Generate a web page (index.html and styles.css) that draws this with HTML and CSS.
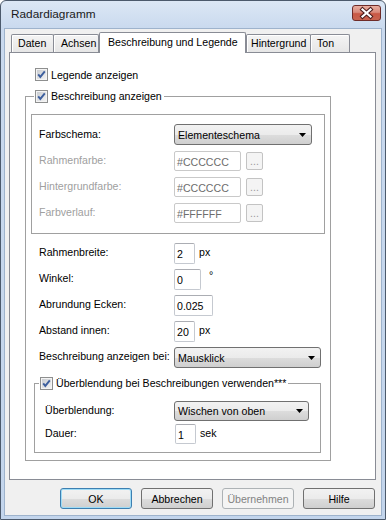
FILE: index.html
```html
<!DOCTYPE html>
<html lang="de">
<head>
<meta charset="utf-8">
<title>Radardiagramm</title>
<link rel="stylesheet" href="styles.css">
</head>
<body>
<svg class="defs" width="0" height="0" aria-hidden="true">
  <defs>
    <linearGradient id="cbfill" x1="0" y1="0" x2="1" y2="1">
      <stop offset="0" stop-color="#c9ccd1"/>
      <stop offset="1" stop-color="#f3f3f3"/>
    </linearGradient>
  </defs>
</svg>
<div class="window">
  <div class="titlebar">
    <span class="title">Radardiagramm</span>
    <span class="close">
      <svg width="29" height="16" viewBox="0 0 29 16">
        <path d="M10.5 4.5 L18.5 11.5 M18.5 4.5 L10.5 11.5" stroke="#4a1c1c" stroke-width="4.2" stroke-linecap="square" fill="none"/>
        <path d="M10.5 4.5 L18.5 11.5 M18.5 4.5 L10.5 11.5" stroke="#ffffff" stroke-width="2.2" stroke-linecap="square" fill="none"/>
      </svg>
    </span>
  </div>
  <div class="client">
    <div class="tabs">
      <div class="tab w-daten">Daten</div>
      <div class="tab w-achsen">Achsen</div>
      <div class="tab active w-beschr">Beschreibung und Legende</div>
      <div class="tab w-hinter">Hintergrund</div>
      <div class="tab w-ton">Ton</div>
    </div>
    <div class="panel">
      <div class="check-row legende">
        <svg class="cb" width="13" height="13" viewBox="0 0 13 13"><rect x="0.5" y="0.5" width="12" height="12" fill="#f4f4f4" stroke="#8e8f8f"/><rect x="2" y="2" width="9" height="9" fill="url(#cbfill)"/><path d="M3.2 6.4 L5.3 8.9 L9.8 3.3" stroke="#3d5f9e" stroke-width="1.9" fill="none"/></svg>
        <span>Legende anzeigen</span>
      </div>
      <fieldset class="grp outer">
        <legend class="legend-outer">
          <svg class="cb" width="13" height="13" viewBox="0 0 13 13"><rect x="0.5" y="0.5" width="12" height="12" fill="#f4f4f4" stroke="#8e8f8f"/><rect x="2" y="2" width="9" height="9" fill="url(#cbfill)"/><path d="M3.2 6.4 L5.3 8.9 L9.8 3.3" stroke="#3d5f9e" stroke-width="1.9" fill="none"/></svg>
          <span>Beschreibung anzeigen</span>
        </legend>
        <div class="box">
          <div class="row r-combo">
            <span class="lbl">Farbschema:</span>
            <span class="combo w-schema"><span>Elementeschema</span><svg width="7" height="4" viewBox="0 0 7 4"><polygon points="0,0 7,0 3.5,4" fill="#000"/></svg></span>
          </div>
          <div class="row r-input">
            <span class="lbl disabled">Rahmenfarbe:</span>
            <span class="input dis w-color">#CCCCCC</span>
            <span class="dots">...</span>
          </div>
          <div class="row r-input">
            <span class="lbl disabled">Hintergrundfarbe:</span>
            <span class="input dis w-color">#CCCCCC</span>
            <span class="dots">...</span>
          </div>
          <div class="row r-input">
            <span class="lbl disabled">Farbverlauf:</span>
            <span class="input dis w-color">#FFFFFF</span>
            <span class="dots">...</span>
          </div>
        </div>
        <div class="rows">
          <div class="row r-field">
            <span class="lbl">Rahmenbreite:</span>
            <span class="input w-small">2</span>
            <span class="unit">px</span>
          </div>
          <div class="row r-field">
            <span class="lbl">Winkel:</span>
            <span class="input w-angle">0</span>
            <span class="unit deg">°</span>
          </div>
          <div class="row r-field">
            <span class="lbl">Abrundung Ecken:</span>
            <span class="input w-round">0.025</span>
          </div>
          <div class="row r-field">
            <span class="lbl">Abstand innen:</span>
            <span class="input w-small">20</span>
            <span class="unit">px</span>
          </div>
          <div class="row r-field">
            <span class="lbl">Beschreibung anzeigen bei:</span>
            <span class="combo w-show"><span>Mausklick</span><svg width="7" height="4" viewBox="0 0 7 4"><polygon points="0,0 7,0 3.5,4" fill="#000"/></svg></span>
          </div>
        </div>
        <fieldset class="grp inner">
          <legend class="legend-inner">
            <svg class="cb" width="13" height="13" viewBox="0 0 13 13"><rect x="0.5" y="0.5" width="12" height="12" fill="#f4f4f4" stroke="#8e8f8f"/><rect x="2" y="2" width="9" height="9" fill="url(#cbfill)"/><path d="M3.2 6.4 L5.3 8.9 L9.8 3.3" stroke="#3d5f9e" stroke-width="1.9" fill="none"/></svg>
            <span>Überblendung bei Beschreibungen verwenden***</span>
          </legend>
          <div class="row r-combo2">
            <span class="lbl lbl-in">Überblendung:</span>
            <span class="combo w-trans"><span>Wischen von oben</span><svg width="7" height="4" viewBox="0 0 7 4"><polygon points="0,0 7,0 3.5,4" fill="#000"/></svg></span>
          </div>
          <div class="row r-dauer">
            <span class="lbl lbl-in lbl-dauer">Dauer:</span>
            <span class="input w-small">1</span>
            <span class="unit">sek</span>
          </div>
        </fieldset>
      </fieldset>
    </div>
    <div class="buttons">
      <span class="btn default">OK</span>
      <span class="btn">Abbrechen</span>
      <span class="btn disabled-btn">Übernehmen</span>
      <span class="btn">Hilfe</span>
    </div>
  </div>
</div>
</body>
</html>
```
FILE: styles.css
```css
html, body {
  margin: 0;
  padding: 0;
}
body {
  width: 386px;
  height: 520px;
  overflow: hidden;
  font-family: "Liberation Sans", Arial, sans-serif;
  font-size: 10.6px;
  color: #000;
  background: #fff;
}
.defs {
  position: absolute;
  width: 0;
  height: 0;
}
.window {
  box-sizing: border-box;
  width: 386px;
  height: 520px;
  border: 1px solid #4c5a6c;
  border-radius: 6px 6px 0 0;
  background: linear-gradient(#dce7f5, #c9d9ee 28px, #c3d5ec);
  padding: 0 3px 3px;
  display: flex;
  flex-direction: column;
}
.titlebar {
  height: 27px;
  flex: none;
  display: flex;
  align-items: center;
  justify-content: space-between;
  padding: 0 1px 0 7px;
}
.title {
  font-size: 11.8px;
  color: #1a1a1a;
  margin-top: -1px;
}
.close {
  width: 29px;
  height: 16px;
  box-sizing: border-box;
  border: 1px solid #6e2b28;
  border-radius: 3px;
  background: linear-gradient(#e9aea0, #d98a7b 45%, #c95845 55%, #c86450);
  display: flex;
  align-items: center;
  justify-content: center;
  margin-top: -3px;
  overflow: hidden;
}
.close svg {
  flex: none;
}
.client {
  flex: 1;
  background: #f0f0f0;
  border: 1px solid #9eb3cc;
  padding: 3px 5px 6px 4px;
  display: flex;
  flex-direction: column;
}
.tabs {
  display: flex;
  align-items: flex-end;
  height: 20px;
  padding-left: 2px;
}
.tab {
  box-sizing: border-box;
  height: 18px;
  border: 1px solid #898c95;
  border-bottom: none;
  border-radius: 2px 2px 0 0;
  background: linear-gradient(#f4f4f4, #e6e6e6);
  box-shadow: inset 1px 1px 0 #ffffff;
  display: flex;
  align-items: center;
  padding-left: 6px;
  padding-bottom: 1px;
  white-space: nowrap;
}
.tab + .tab {
  margin-left: -1px;
}
.tab.active {
  height: 21px;
  margin-bottom: -1px;
  background: #ffffff;
  box-shadow: none;
  position: relative;
  z-index: 1;
  padding-left: 8px;
  padding-bottom: 2px;
}
.tab.active + .tab {
  margin-left: 0;
}
.w-daten { width: 43px; }
.w-achsen { width: 46px; padding-left: 7px; }
.w-beschr { width: 147px; margin-left: 0 !important; }
.w-hinter { width: 65px; padding-left: 4px; }
.w-ton { width: 40px; }
.panel {
  box-sizing: border-box;
  height: 428px;
  background: #ffffff;
  border: 1px solid #898c95;
  padding: 15px 0 0 15px;
}
.check-row {
  display: flex;
  align-items: center;
  height: 13px;
  margin-left: 10px;
}
.cb {
  flex: none;
  display: block;
  margin-right: 3px;
}
.grp {
  margin: 0;
  min-width: 0;
  border: 1px solid #d5dfe5;
}
.outer {
  box-sizing: border-box;
  width: 306px;
  margin-top: 9px;
  padding: 11px 5px 7px 5px;
  border-color: #a0a0a0;
}
legend {
  display: flex;
  align-items: center;
  height: 13px;
  line-height: 13px;
  white-space: nowrap;
}
.legend-outer {
  margin-left: 3px;
  padding: 0 2px 0 1px;
}
.box {
  border: 1px solid #a0a0a0;
  padding: 9px 0 10px 7px;
  display: flex;
  flex-direction: column;
  gap: 6px;
}
.row {
  display: flex;
  align-items: flex-start;
}
.lbl {
  flex: none;
  width: 135px;
  line-height: 13px;
  margin-top: 3px;
  white-space: nowrap;
}
.lbl.disabled {
  color: #a0a0a0;
}
.r-combo .lbl {
  margin-top: 4px;
}
.combo {
  box-sizing: border-box;
  height: 21px;
  border: 1px solid #707070;
  border-radius: 3px;
  background: linear-gradient(#f2f2f2, #ebebeb 50%, #dddddd 50%, #cfcfcf);
  display: flex;
  align-items: center;
  justify-content: space-between;
  padding: 0 5px 0 3px;
  white-space: nowrap;
}
.w-schema { width: 138px; }
.w-show { width: 147px; }
.w-trans { width: 135px; height: 20px; }
.input {
  box-sizing: border-box;
  height: 21px;
  border: 1px solid #c5c9d0;
  border-top-color: #abadb3;
  border-radius: 2px;
  background: #ffffff;
  display: flex;
  align-items: center;
  padding-left: 2px;
  padding-top: 1px;
  white-space: nowrap;
}
.r-input .input {
  height: 20px;
}
.input.dis {
  color: #6d6d6d;
  border-color: #c9c9c9;
}
.w-color { width: 67px; }
.w-small { width: 21px; }
.w-angle { width: 27px; }
.w-round { width: 39px; }
.dots {
  box-sizing: border-box;
  width: 17px;
  height: 18px;
  margin: 1px 0 0 5px;
  border: 1px solid #c3c3c3;
  border-radius: 2px;
  background: #f4f4f4;
  color: #9a9a9a;
  display: flex;
  align-items: flex-end;
  justify-content: center;
  line-height: 11px;
  padding-bottom: 2px;
}
.rows {
  display: flex;
  flex-direction: column;
  gap: 5px;
  padding-left: 8px;
  margin-top: 9px;
}
.unit {
  margin-left: 4px;
  margin-top: 3px;
  line-height: 13px;
}
.unit.deg {
  margin-left: 8px;
  margin-top: 0;
}
.inner {
  box-sizing: border-box;
  width: 287px;
  margin: 9px 0 0 3px;
  padding: 11px 0 8px 4px;
  border-color: #a0a0a0;
}
.legend-inner {
  padding: 0 2px 0 1px;
}
.r-combo2, .r-dauer {
  margin-left: 6px;
}
.r-dauer {
  margin-top: 3px;
}
.r-dauer .input {
  width: 21px;
  margin-left: 1px;
  height: 20px;
}
.lbl-in {
  width: 129px;
}
.buttons {
  display: flex;
  justify-content: flex-end;
  gap: 9px;
  margin-top: 8px;
  padding-right: 1px;
}
.btn {
  box-sizing: border-box;
  width: 72px;
  height: 21px;
  border: 1px solid #707070;
  border-radius: 3px;
  background: linear-gradient(#f2f2f2, #ebebeb 50%, #dddddd 50%, #cfcfcf);
  display: flex;
  align-items: center;
  justify-content: center;
  white-space: nowrap;
}
.btn.default {
  border-color: #3c7fb1;
  box-shadow: inset 0 0 0 1px #9fdcf6;
}
.btn.disabled-btn {
  border-color: #adb2b5;
  background: #f4f4f4;
  color: #838383;
}
```
